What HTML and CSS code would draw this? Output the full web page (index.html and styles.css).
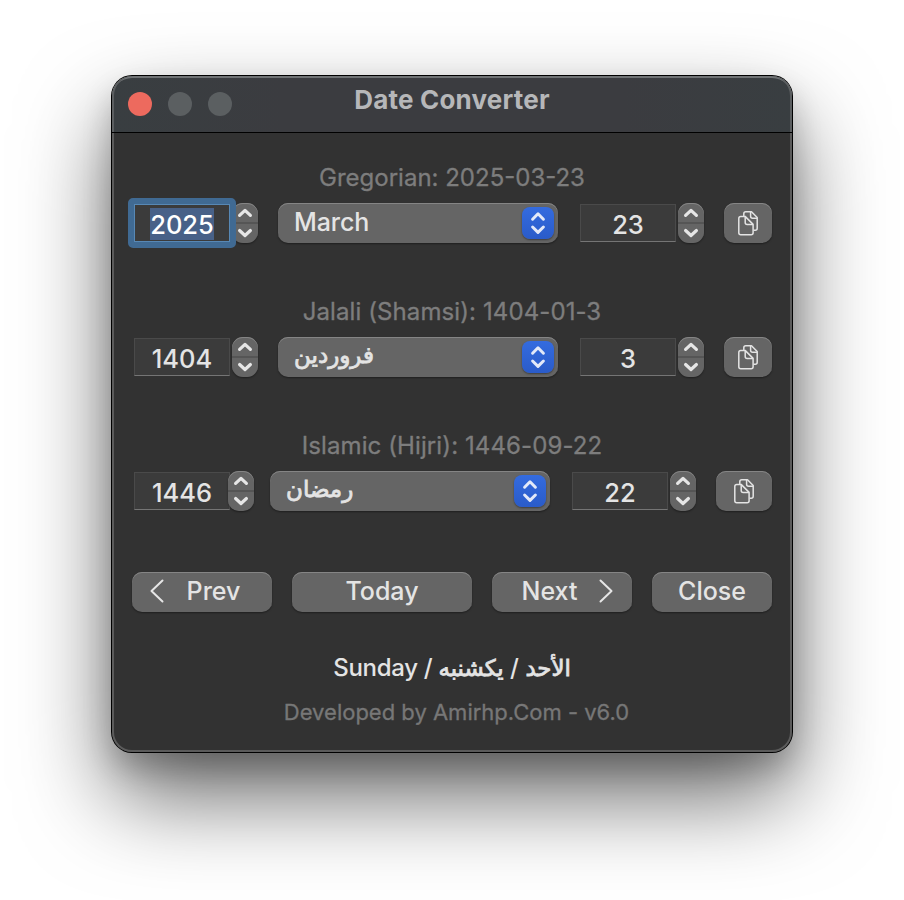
FILE: index.html
```html
<!DOCTYPE html>
<html lang="en">
<head>
<meta charset="utf-8">
<title>Date Converter</title>
<link rel="stylesheet" href="styles.css">
</head>
<body>
<svg width="0" height="0" class="defs">
  <symbol id="updown" viewBox="0 0 26 40"><path d="M7.600 12.400 13 7.400l5.400 5M7.600 27.500l5.400 5 5.400-5" fill="none" stroke="#e6e6e6" stroke-width="3.200" stroke-linecap="round" stroke-linejoin="round"/></symbol>
  <symbol id="chevrons" viewBox="0 0 32 32"><path d="M10.600 12.200 16 6.800l5.400 5.400M10.600 20l5.400 5.400 5.400-5.400" fill="none" stroke="#e3e9f8" stroke-width="3" stroke-linecap="round" stroke-linejoin="round"/></symbol>
  <symbol id="copy" viewBox="0 0 20 25"><g fill="none" stroke="#e4e4e4" stroke-width="1.500" stroke-linejoin="round"><path d="M5.800 5V2.800Q5.800.8 7.800.8h5.700l5.700 5.700v10.700q0 2-2 2H15.500"/><path d="M12.600.9v4.400q0 2 2 2h4.500"/><path d="M.8 7.400q0-2 2-2h4.300l8 8v8.400q0 2-2 2H2.800q-2 0-2-2z"/><path d="M7.200 5.500v6q0 2 2 2h5.800"/></g></symbol>
  <symbol id="left" viewBox="0 0 14 24"><path d="M12.500 1.500 1.500 12l11 10.500" fill="none" stroke="#e6e6e6" stroke-width="2" stroke-linecap="round" stroke-linejoin="round"/></symbol>
  <symbol id="right" viewBox="0 0 14 24"><path d="M1.500 1.500 12.500 12l-11 10.500" fill="none" stroke="#e6e6e6" stroke-width="2" stroke-linecap="round" stroke-linejoin="round"/></symbol>
</svg>
<main class="window">
  <header class="titlebar">
    <div class="lights"><i class="light close"></i><i class="light"></i><i class="light"></i></div>
    <h1 class="title"><span>Date Converter</span></h1>
  </header>
  <section class="calendar">
    <p class="label"><span>Gregorian: 2025-03-23</span></p>
    <div class="row">
      <div class="field focused"><span class="selected">2025</span></div>
      <div class="stepper"><svg><use href="#updown"/></svg></div>
      <div class="select"><span>March</span><b class="knob"><svg><use href="#chevrons"/></svg></b></div>
      <div class="field"><span>23</span></div>
      <div class="stepper"><svg><use href="#updown"/></svg></div>
      <div class="button copy"><svg><use href="#copy"/></svg></div>
    </div>
  </section>
  <section class="calendar">
    <p class="label spaced"><span>Jalali (Shamsi): 1404-01-3</span></p>
    <div class="row">
      <div class="field"><span>1404</span></div>
      <div class="stepper"><svg><use href="#updown"/></svg></div>
      <div class="select"><span class="arabic" lang="fa">فروردین</span><b class="knob"><svg><use href="#chevrons"/></svg></b></div>
      <div class="field"><span>3</span></div>
      <div class="stepper"><svg><use href="#updown"/></svg></div>
      <div class="button copy"><svg><use href="#copy"/></svg></div>
    </div>
  </section>
  <section class="calendar">
    <p class="label spaced"><span>Islamic (Hijri): 1446-09-22</span></p>
    <div class="row tight">
      <div class="field"><span>1446</span></div>
      <div class="stepper"><svg><use href="#updown"/></svg></div>
      <div class="select"><span class="arabic" lang="ar">رمضان</span><b class="knob"><svg><use href="#chevrons"/></svg></b></div>
      <div class="field"><span>22</span></div>
      <div class="stepper"><svg><use href="#updown"/></svg></div>
      <div class="button copy wide"><svg><use href="#copy"/></svg></div>
    </div>
  </section>
  <nav class="actions">
    <div class="button prev"><svg><use href="#left"/></svg><span>Prev</span></div>
    <div class="button today"><span>Today</span></div>
    <div class="button next"><span>Next</span><svg><use href="#right"/></svg></div>
    <div class="button close-button"><span>Close</span></div>
  </nav>
  <p class="weekday"><span>Sunday / </span><span class="arabic" dir="rtl">یکشنبه</span><span> / </span><span class="arabic" dir="rtl">الأحد</span></p>
  <p class="credit"><span>Developed by Amirhp.Com - v6.0</span></p>
</main>
</body>
</html>
```
FILE: styles.css
```css
* { box-sizing: border-box; }
body {
  margin: 0;
  height: 900px;
  overflow: hidden;
  background: #fff;
  color: #e4e4e4;
  font-family: Inter, "Noto Sans", "DejaVu Sans", sans-serif;
  font-size: 25px;
  font-weight: 500;
}
.defs { display: block; }
h1, p { margin: 0; }
span { white-space: pre; }
.window {
  width: 680px;
  height: 676px;
  margin: 76px auto 0;
  padding: 0 20px;
  border-radius: 20px;
  background: #323232;
  box-shadow: inset 0 0 0 2px #5b5b5b, 0 0 0 1px #000, 0 44px 90px rgba(0, 0, 0, .6), 0 16px 30px rgba(0, 0, 0, .2);
}
.titlebar {
  display: grid;
  grid-template-columns: 1fr auto 1fr;
  height: 57px;
  margin: 0 -20px;
  padding: 0 16px;
  border-bottom: 1px solid #000;
  border-radius: 20px 20px 0 0;
  background: linear-gradient(90deg, #393e41, #3b3c40 25%, #3b3c40 75%, #393e41);
  box-shadow: inset 2px 0 #5b5e60, inset -2px 0 #5b5e60, inset 0 2px #707375;
}
.lights { display: flex; gap: 16px; padding-top: 16px; }
.light { width: 24px; height: 24px; border-radius: 50%; background: #5b5f61; }
.light.close { background: #ed6a5e; }
.title { font-size: 26px; line-height: 48px; letter-spacing: .2px; color: #b6b7b9; }
.calendar { height: 134px; padding-top: 29px; }
.label { text-align: center; font-size: 24px; font-weight: 400; line-height: 32px; color: #7d7d7d; -webkit-text-stroke: .3px #7d7d7d; }
.spaced { letter-spacing: .1px; }
.row { display: flex; align-items: center; height: 40px; margin-top: 9px; padding-left: 2px; }
.field {
  width: 96px;
  height: 38px;
  line-height: 39px;
  text-align: center;
  font-size: 25.500px;
  background: #3b3b3b;
  border: 1px solid #4a4a4a;
  border-bottom: 1px solid #757575;
}
.focused { position: relative; z-index: 1; border-color: #5788b5; color: #fff; }
.focused::after {
  content: "";
  position: absolute;
  inset: -7px;
  border: 6px solid #406a93;
  border-radius: 5px;
}
.selected { display: inline-block; height: 32px; line-height: 34px; margin-top: 2px; background: #486188; }
.stepper, .button, .select {
  height: 40px;
  background: #656565;
  box-shadow: inset 0 1px #858585, 0 1px 2px rgba(0, 0, 0, .4);
}
.stepper {
  width: 26px;
  margin-left: 2px;
  border-radius: 11px;
  background: linear-gradient(#656565 19px, #555 19px, #555 21px, #656565 21px);
}
.tight .field + .stepper { position: relative; }
.stepper svg { display: block; width: 26px; height: 40px; }
.select { display: flex; justify-content: space-between; width: 280px; margin: 0 22px 0 20px; padding: 4px 4px 4px 16px; border-radius: 10px; line-height: 30px; }
.arabic { font-family: "DejaVu Sans", sans-serif; font-size: 23px; font-weight: 400; -webkit-text-stroke: .8px currentColor; }
.select .arabic { margin-top: -1px; }
.select span:not(.arabic) { letter-spacing: -.1px; }
.knob { width: 32px; height: 32px; border-radius: 8px; background: linear-gradient(#346bdf, #2a5bc9); box-shadow: 0 1px 2px rgba(0, 0, 0, .4); }
.knob svg { display: block; width: 32px; height: 32px; }
.button { display: flex; align-items: center; justify-content: center; border-radius: 10px; }
.copy { width: 48px; margin-left: 20px; }
.copy svg { width: 20px; height: 25px; }
.tight .field + .stepper { margin-left: -2px; }
.tight .select { margin-left: 16px; }
.tight .select ~ .stepper { margin-left: 2px; }
.tight .wide { width: 56px; }
.actions { display: flex; gap: 20px; padding-top: 37px; line-height: 38px; }
.actions .button { align-items: flex-start; }
.actions svg { width: 14px; height: 24px; margin-top: 7px; }
.prev, .next { width: 140px; }
.prev { padding-right: 14px; }
.prev svg { margin-right: 23px; }
.next { padding-left: 11px; }
.next svg { margin-left: 22px; }
.today { width: 180px; }
.close-button { width: 120px; }
.weekday { height: 32px; margin-top: 40px; text-align: center; font-size: 24px; letter-spacing: -.3px; line-height: 32px; }
.weekday .arabic { font-size: 22.800px; letter-spacing: 0; }
.credit { margin-top: 12px; padding-left: 9px; text-align: center; font-size: 22px; font-weight: 400; line-height: 32px; color: #777; -webkit-text-stroke: .3px #777; }
```
